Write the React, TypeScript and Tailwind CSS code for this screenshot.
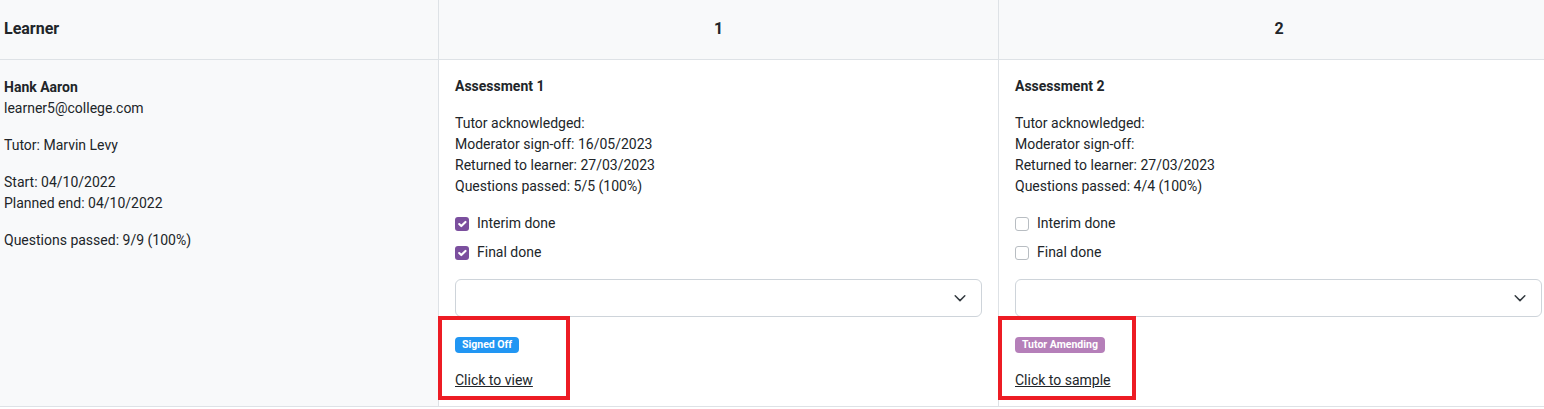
import React from "react";

const font = { fontFamily: "Roboto, 'Liberation Sans', sans-serif" };

function Check({ checked, label }: { checked: boolean; label: string }) {
  return (
    <div className="flex items-center h-[21px] mb-2 gap-2">
      {checked ? (
        <span className="w-[14px] h-[14px] rounded-[3px] bg-[#7b4f9e] flex items-center justify-center">
          <svg viewBox="0 0 20 20" className="w-[14px] h-[14px]">
            <path d="m6 10 3 3 6-6" fill="none" stroke="#fff" strokeWidth="3" strokeLinecap="round" strokeLinejoin="round" />
          </svg>
        </span>
      ) : (
        <span className="w-[14px] h-[14px] rounded-[3px] border border-[#b8bdc2] bg-white" />
      )}
      <span>{label}</span>
    </div>
  );
}

function Select() {
  return (
    <div className="h-[38px] w-[527px] border border-[#ced4da] rounded-[6px] bg-white flex items-center justify-end pr-[14px]">
      <svg viewBox="0 0 16 16" className="w-[14px] h-[14px]">
        <path d="m2.5 5.5 5.5 5.5 5.5-5.5" fill="none" stroke="#343a40" strokeWidth="1.7" strokeLinecap="round" strokeLinejoin="round" />
      </svg>
    </div>
  );
}

function AssessmentCell(props: {
  title: string;
  mod: string;
  returned: string;
  passed: string;
  checked: boolean;
  badge: string;
  badgeClass: string;
  link: string;
  boxW: string;
  border: boolean;
}) {
  return (
    <div className={`bg-white pt-4 px-4 pb-[15px] border-b border-[#dee2e6] ${props.border ? "border-r" : ""}`}>
      <div className="font-bold leading-[21px] mb-4">{props.title}</div>
      <div className="leading-[21px] mb-4">
        <div>Tutor acknowledged:</div>
        <div>Moderator sign-off:{props.mod ? " " + props.mod : ""}</div>
        <div>Returned to learner: {props.returned}</div>
        <div>Questions passed: {props.passed}</div>
      </div>
      <Check checked={props.checked} label="Interim done" />
      <Check checked={props.checked} label="Final done" />
      <div className="mt-4">
        <Select />
      </div>
      <div className="relative mt-5">
        <div className="flex">
          <span
            className={`flex items-center h-4 px-[7px] rounded-[4px] text-white font-bold text-[10.5px] leading-none ${props.badgeClass}`}
          >
            {props.badge}
          </span>
        </div>
        <div className="mt-[17px] leading-[21px]">
          <a className="underline text-[#212529] cursor-pointer">{props.link}</a>
        </div>
        <span
          className={`absolute -left-[17px] -top-[21px] h-[84px] ${props.boxW} border-4 border-[#ed1c24] pointer-events-none`}
        />
      </div>
    </div>
  );
}

export default function App() {
  return (
    <div className="w-[1544px] h-[409px] overflow-hidden bg-white text-[14px] text-[#212529]" style={font}>
      <div className="grid grid-cols-[439px_560px_560px] w-[1559px]">
        <div className="h-[60px] pb-[2px] bg-[#f8f9fa] border-b border-r border-[#dee2e6] flex items-center pl-1 font-bold text-[16px]">
          Learner
        </div>
        <div className="h-[60px] pb-[2px] bg-[#f8f9fa] border-b border-r border-[#dee2e6] flex items-center justify-center font-bold text-[16px]">
          1
        </div>
        <div className="h-[60px] pb-[2px] bg-[#f8f9fa] border-b border-[#dee2e6] flex items-center justify-center font-bold text-[16px]">
          2
        </div>

        <div className="bg-[#f8f9fa] border-r border-b border-[#dee2e6] pt-[17px] pl-1 leading-[21px]">
          <div className="font-bold">Hank Aaron</div>
          <div className="mb-4">learner5@college.com</div>
          <div className="mb-4">Tutor: Marvin Levy</div>
          <div>Start: 04/10/2022</div>
          <div className="mb-4">Planned end: 04/10/2022</div>
          <div>Questions passed: 9/9 (100%)</div>
        </div>
        <AssessmentCell
          title="Assessment 1"
          mod="16/05/2023"
          returned="27/03/2023"
          passed="5/5 (100%)"
          checked={true}
          badge="Signed Off"
          badgeClass="bg-[#2196f3]"
          link="Click to view"
          boxW="w-[132px]"
          border={true}
        />
        <AssessmentCell
          title="Assessment 2"
          mod=""
          returned="27/03/2023"
          passed="4/4 (100%)"
          checked={false}
          badge="Tutor Amending"
          badgeClass="bg-[#b57fb9]"
          link="Click to sample"
          boxW="w-[138px]"
          border={false}
        />
      </div>
    </div>
  );
}
